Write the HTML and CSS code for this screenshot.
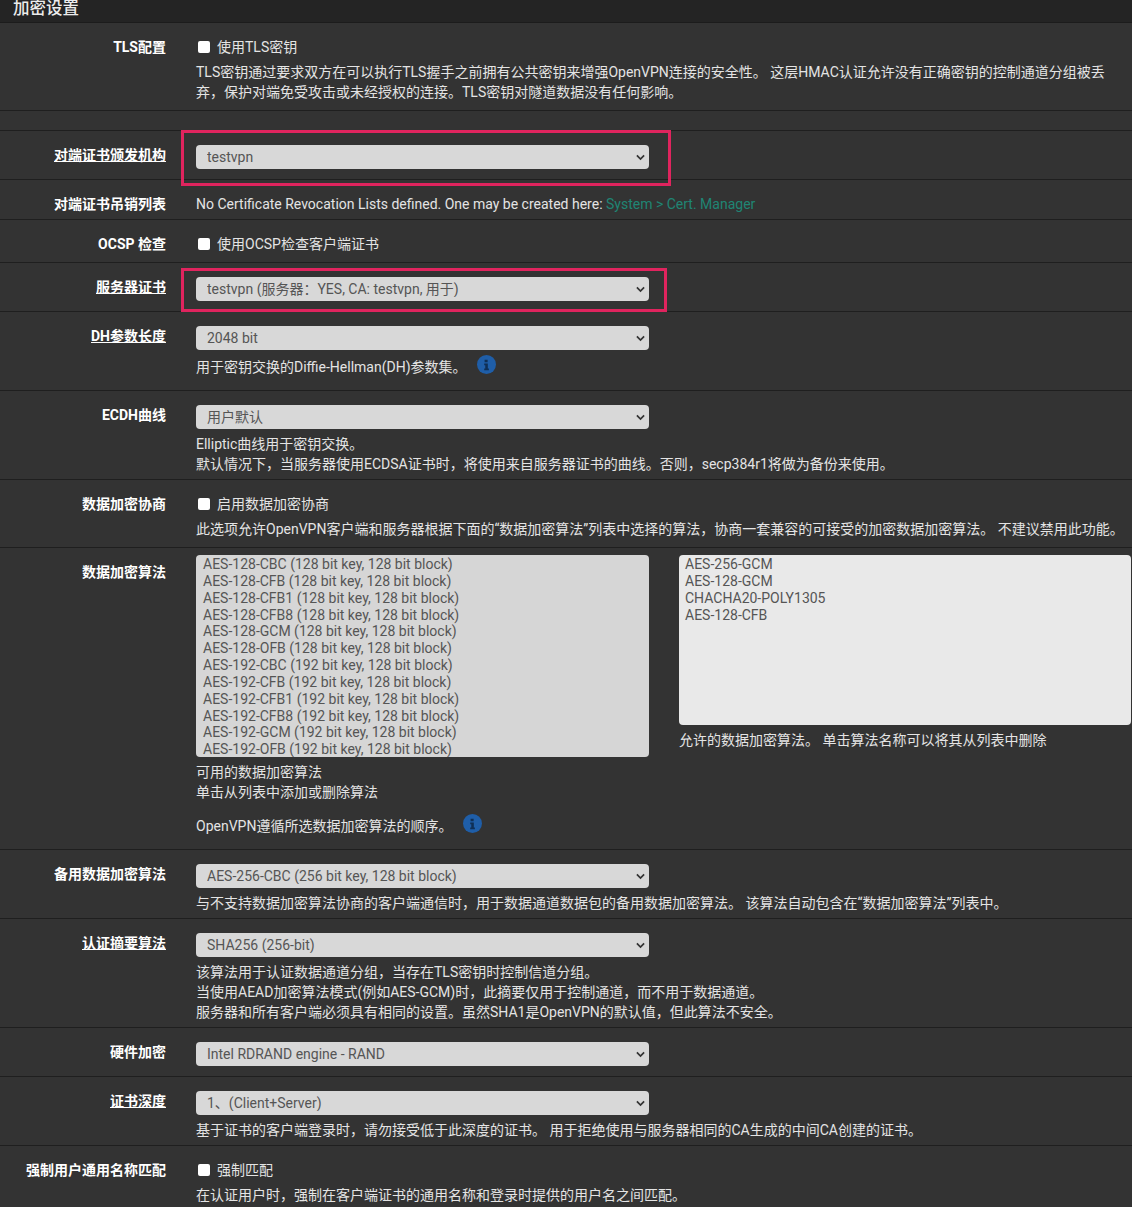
FILE: index.html
```html
<!DOCTYPE html>
<html lang="zh-CN">
<head>
  <meta charset="UTF-8" />
  <meta name="viewport" content="width=device-width, initial-scale=1.0" />
  <title>加密设置</title>
  <link rel="stylesheet" href="styles.css">
</head>
<body>
  <h2 class="panel-title">加密设置</h2>

  <div class="row row-check">
    <div class="label">TLS配置</div>
    <div class="field">
      <label class="check"><input type="checkbox"> 使用TLS密钥</label>
      <div class="help">TLS密钥通过要求双方在可以执行TLS握手之前拥有公共密钥来增强OpenVPN连接的安全性。 这层HMAC认证允许没有正确密钥的控制通道分组被丢<br>弃，保护对端免受攻击或未经授权的连接。TLS密钥对隧道数据没有任何影响。</div>
    </div>
  </div>

  <div class="row-spacer"></div>

  <div class="row">
    <div class="label"><u>对端证书颁发机构</u></div>
    <div class="field">
      <select><option>testvpn</option></select>
    </div>
    <div class="mark mark-ca"></div>
  </div>

  <div class="row">
    <div class="label">对端证书吊销列表</div>
    <div class="field plain">No Certificate Revocation Lists defined. One may be created here: <a href="#">System &gt; Cert. Manager</a></div>
  </div>

  <div class="row row-check">
    <div class="label">OCSP 检查</div>
    <div class="field">
      <label class="check"><input type="checkbox"> 使用OCSP检查客户端证书</label>
    </div>
  </div>

  <div class="row">
    <div class="label"><u>服务器证书</u></div>
    <div class="field">
      <select><option>testvpn (服务器：YES, CA: testvpn, 用于)</option></select>
    </div>
    <div class="mark mark-cert"></div>
  </div>

  <div class="row">
    <div class="label"><u>DH参数长度</u></div>
    <div class="field">
      <select><option>2048 bit</option></select>
      <div class="help help-info">用于密钥交换的Diffie-Hellman(DH)参数集。
        <svg class="info" viewBox="0 0 20 20"><circle cx="10" cy="10" r="10" fill="#1f5ea8"/><path d="M8 5h3.2v2.6H8zM7.6 9h3.8v5.2h1.1V16H7.6v-1.8h1.1v-3.4H7.6z" fill="#0f2f55"/></svg>
      </div>
    </div>
  </div>

  <div class="row">
    <div class="label">ECDH曲线</div>
    <div class="field">
      <select><option>用户默认</option></select>
      <div class="help">Elliptic曲线用于密钥交换。<br>默认情况下，当服务器使用ECDSA证书时，将使用来自服务器证书的曲线。否则，secp384r1将做为备份来使用。</div>
    </div>
  </div>

  <div class="row row-check">
    <div class="label">数据加密协商</div>
    <div class="field">
      <label class="check"><input type="checkbox"> 启用数据加密协商</label>
      <div class="help">此选项允许OpenVPN客户端和服务器根据下面的“数据加密算法”列表中选择的算法，协商一套兼容的可接受的加密数据加密算法。 不建议禁用此功能。</div>
    </div>
  </div>

  <div class="row">
    <div class="label">数据加密算法</div>
    <div class="field lists">
      <div class="list-col">
        <select class="list list-left" multiple>
          <option>AES-128-CBC (128 bit key, 128 bit block)</option>
          <option>AES-128-CFB (128 bit key, 128 bit block)</option>
          <option>AES-128-CFB1 (128 bit key, 128 bit block)</option>
          <option>AES-128-CFB8 (128 bit key, 128 bit block)</option>
          <option>AES-128-GCM (128 bit key, 128 bit block)</option>
          <option>AES-128-OFB (128 bit key, 128 bit block)</option>
          <option>AES-192-CBC (192 bit key, 128 bit block)</option>
          <option>AES-192-CFB (192 bit key, 128 bit block)</option>
          <option>AES-192-CFB1 (192 bit key, 128 bit block)</option>
          <option>AES-192-CFB8 (192 bit key, 128 bit block)</option>
          <option>AES-192-GCM (192 bit key, 128 bit block)</option>
          <option>AES-192-OFB (192 bit key, 128 bit block)</option>
          <option>AES-256-CBC (256 bit key, 128 bit block)</option>
          <option>AES-256-CFB (256 bit key, 128 bit block)</option>
        </select>
        <div class="help">可用的数据加密算法<br>单击从列表中添加或删除算法</div>
        <div class="help help-info help-order">OpenVPN遵循所选数据加密算法的顺序。
          <svg class="info" viewBox="0 0 20 20"><circle cx="10" cy="10" r="10" fill="#1f5ea8"/><path d="M8 5h3.2v2.6H8zM7.6 9h3.8v5.2h1.1V16H7.6v-1.8h1.1v-3.4H7.6z" fill="#0f2f55"/></svg>
        </div>
      </div>
      <div class="list-col">
        <select class="list list-right" multiple>
          <option>AES-256-GCM</option>
          <option>AES-128-GCM</option>
          <option>CHACHA20-POLY1305</option>
          <option>AES-128-CFB</option>
        </select>
        <div class="help">允许的数据加密算法。 单击算法名称可以将其从列表中删除</div>
      </div>
    </div>
  </div>

  <div class="row">
    <div class="label">备用数据加密算法</div>
    <div class="field">
      <select><option>AES-256-CBC (256 bit key, 128 bit block)</option></select>
      <div class="help">与不支持数据加密算法协商的客户端通信时，用于数据通道数据包的备用数据加密算法。 该算法自动包含在“数据加密算法”列表中。</div>
    </div>
  </div>

  <div class="row">
    <div class="label"><u>认证摘要算法</u></div>
    <div class="field">
      <select><option>SHA256 (256-bit)</option></select>
      <div class="help">该算法用于认证数据通道分组，当存在TLS密钥时控制信道分组。<br>当使用AEAD加密算法模式(例如AES-GCM)时，此摘要仅用于控制通道，而不用于数据通道。<br>服务器和所有客户端必须具有相同的设置。虽然SHA1是OpenVPN的默认值，但此算法不安全。</div>
    </div>
  </div>

  <div class="row">
    <div class="label">硬件加密</div>
    <div class="field">
      <select><option>Intel RDRAND engine - RAND</option></select>
    </div>
  </div>

  <div class="row">
    <div class="label"><u>证书深度</u></div>
    <div class="field">
      <select><option>1、(Client+Server)</option></select>
      <div class="help">基于证书的客户端登录时，请勿接受低于此深度的证书。 用于拒绝使用与服务器相同的CA生成的中间CA创建的证书。</div>
    </div>
  </div>

  <div class="row row-check">
    <div class="label">强制用户通用名称匹配</div>
    <div class="field">
      <label class="check"><input type="checkbox"> 强制匹配</label>
      <div class="help">在认证用户时，强制在客户端证书的通用名称和登录时提供的用户名之间匹配。</div>
    </div>
  </div>
</body>
</html>
```

FILE: styles.css
```css
html, body { height: 1207px; overflow: hidden; }
body { margin: 0; background: #333; color: #e4e4e4; font: 14px/20px Roboto, "Noto Sans CJK SC", sans-serif; }
.panel-title { margin: 0; height: 22px; padding-left: 13px; background: #242424; border-bottom: 1px solid #1c1c1c; color: #ececec; font-size: 16.5px; font-weight: 500; line-height: 18px; }
.row { position: relative; display: flex; padding: 14px 0 5px; border-bottom: 1px solid #1f1f1f; }
.row-check { padding-bottom: 8px; }
.row-spacer { height: 19px; border-bottom: 1px solid #1f1f1f; }
.label { width: 166px; flex: none; text-align: right; color: #fff; font-weight: 700; }
.field { margin-left: 30px; width: 936px; flex: none; white-space: nowrap; }
.check { display: flex; align-items: center; gap: 7px; padding-left: 2px; }
.check input { appearance: none; width: 12px; height: 12px; margin: 0; background: #fff; border-radius: 2px; }
.check + .help { margin-top: 5px; }
.help-info { height: 28px; margin-top: 7px; }
.info { position: relative; top: -2px; width: 19px; height: 19px; margin-left: 7px; vertical-align: top; }
.plain a { color: #1f8574; text-decoration: none; }
select { display: block; width: 453px; height: 24px; margin: 0 0 5px; padding: 0 24px 0 11px; appearance: none; border: 0; border-radius: 4px; background: #d8d8d8 url("data:image/svg+xml,%3Csvg xmlns='http://www.w3.org/2000/svg' viewBox='0 0 10 7'%3E%3Cpath d='M1 1.2l4 4 4-4' fill='none' stroke='%23333' stroke-width='1.9'/%3E%3C/svg%3E") no-repeat right 4px center / 9px 7px; color: #555; font: 14px Roboto, "Noto Sans CJK SC", sans-serif; }
.lists { display: flex; gap: 30px; margin-top: -7px; }
.list { padding: 1px 6px; background: #d6d6d6; scrollbar-width: none; overflow: hidden; }
.list option { min-height: 16.85px; padding: 0 1px; line-height: 16.85px; }
.list-left { height: 202px; }
.list-right { width: 452px; height: 170px; padding-left: 5px; background: #e9e9e9; }
.help-order { margin-top: 14px; }
.mark { position: absolute; border: 3px solid #e0245e; box-sizing: border-box; pointer-events: none; }
.mark-ca { left: 181px; top: -1px; width: 490px; height: 56px; }
.mark-cert { left: 181px; top: 5px; width: 486px; height: 44px; }
```
